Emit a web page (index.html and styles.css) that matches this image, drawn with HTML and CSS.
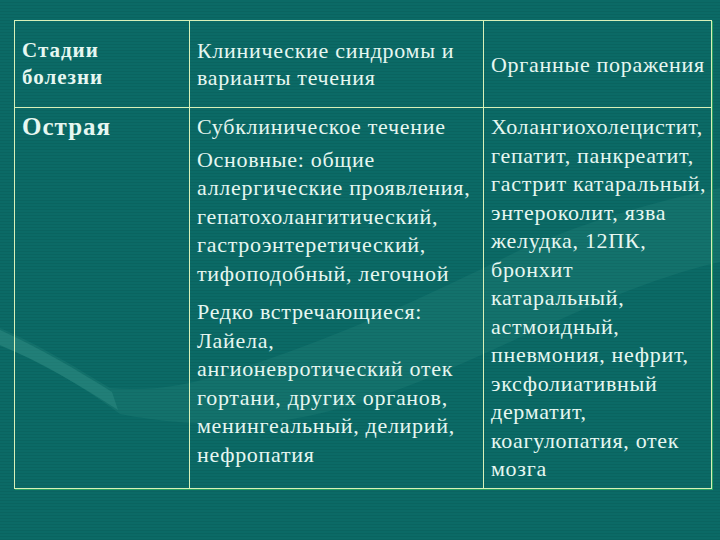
FILE: index.html
```html
<!DOCTYPE html>
<html lang="ru">
<head>
<meta charset="utf-8">
<link rel="stylesheet" href="styles.css">
</head>
<body>
<div class="slide">
  <svg class="wave" width="720" height="540" viewBox="0 0 720 540" aria-hidden="true">
    <path d="M0 328 C40 345 80 370 110 388 C150 392 190 385 230 372 C330 340 420 300 520 250 C590 220 660 200 720 188 L720 262 C640 280 560 320 470 360 C400 392 320 420 250 424 C200 426 150 420 120 414 C80 385 40 360 0 346 Z" fill="#3e9c92" opacity="0.16"/>
    <path d="M0 330 C40 348 80 372 112 392 L118 410 C80 385 40 362 0 345 Z" fill="#4aa79c" opacity="0.25"/>
  </svg>
  <table class="grid">
    <colgroup>
      <col class="c1"><col class="c2"><col class="c3">
    </colgroup>
    <tr class="head">
      <td class="stage">Стадии<br>болезни</td>
      <td>Клинические синдромы и<br>варианты течения</td>
      <td class="mid">Органные поражения</td>
    </tr>
    <tr class="body">
      <td class="stage big">Острая</td>
      <td>
        <p class="p1">Субклиническое течение</p>
        <p class="p2">Основные: общие<br>аллергические проявления,<br>гепатохолангитический,<br>гастроэнтеретический,<br>тифоподобный, легочной</p>
        <p class="p3">Редко встречающиеся:<br>Лайела,<br>ангионевротический отек<br>гортани, других органов,<br>менингеальный, делирий,<br>нефропатия</p>
      </td>
      <td>
        <p class="p1">Холангиохолецистит,<br>гепатит, панкреатит,<br>гастрит катаральный,<br>энтероколит, язва<br>желудка, 12ПК,<br>бронхит<br>катаральный,<br>астмоидный,<br>пневмония, нефрит,<br>эксфолиативный<br>дерматит,<br>коагулопатия, отек<br>мозга</p>
      </td>
    </tr>
  </table>
</div>
</body>
</html>
```

FILE: styles.css
```css
html, body {
  margin: 0;
  padding: 0;
}
body {
  width: 720px;
  height: 540px;
  overflow: hidden;
  background: #0b6864;
}
.slide {
  position: relative;
  width: 720px;
  height: 540px;
  padding: 20px 0 0 14px;
  box-sizing: border-box;
  background: repeating-linear-gradient(180deg, #0b6a66 0px, #0b6a66 2px, #0a6460 2px, #0a6460 3px);
}
.wave {
  position: absolute;
  left: 0;
  top: 0;
}
.grid {
  position: relative;
  border-collapse: collapse;
  table-layout: fixed;
  width: 697px;
  font-family: "Liberation Serif", "DejaVu Serif", serif;
  color: #e6f7f1;
  border: 1.5px solid #dcf2a8;
  box-shadow: 1px 1px 0 #2aa060;
}
.c1 { width: 175px; }
.c2 { width: 294px; }
.c3 { width: 228px; }
td {
  border: 1px solid #d8f0b8;
  vertical-align: top;
  padding: 0 2px 0 7px;
  font-size: 22px;
  letter-spacing: 0.7px;
  line-height: 28.5px;
  white-space: nowrap;
}
.head td {
  height: 87px;
  box-sizing: border-box;
  padding-top: 16px;
  line-height: 27px;
}
.head td.mid {
  vertical-align: middle;
  padding-top: 0;
}
.stage {
  font-weight: bold;
  font-size: 21px;
  letter-spacing: 1px;
}
.body td.big {
  font-size: 25px;
  letter-spacing: 1px;
}
.body td {
  height: 381px;
  box-sizing: border-box;
  padding-top: 5px;
}
p {
  margin: 0;
}
.p2 {
  margin-top: 4px;
}
.p3 {
  margin-top: 10px;
}
```
